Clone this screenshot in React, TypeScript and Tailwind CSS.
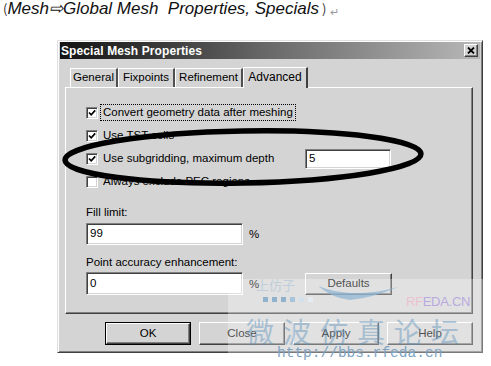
import React from 'react'

const UI = "font-['Liberation_Sans',Arial,sans-serif]"

const RAISED =
  'border border-t-white border-l-white border-r-[#404040] border-b-[#404040] shadow-[inset_-1px_-1px_0_#808080]'
const SUNKEN =
  'border border-t-[#808080] border-l-[#808080] border-r-white border-b-white shadow-[inset_1px_1px_0_#404040,inset_-1px_-1px_0_#d4d4d4] bg-white'

function Check({ checked }: { checked: boolean }) {
  return (
    <span className={`w-[12px] h-[12px] shrink-0 flex items-center justify-center ${SUNKEN}`}>
      {checked && (
        <svg width="8" height="8" viewBox="0 0 8 8">
          <path d="M1 3.5 L3.2 5.8 L7.2 1.4" stroke="#000" strokeWidth="1.7" fill="none" />
        </svg>
      )}
    </span>
  )
}

function Tab({ label, w, active }: { label: string; w: string; active?: boolean }) {
  if (active) {
    return (
      <div className={`${w} h-[21px] -mb-[1px] z-10 bg-[#d4d4d4] border-t border-l border-t-white border-l-white border-r-2 border-r-[#404040] flex items-center justify-center pb-[2px] text-[12px]`}>
        {label}
      </div>
    )
  }
  return (
    <div className={`${w} h-[19px] bg-[#d4d4d4] border-t border-l border-t-white border-l-white border-r-2 border-r-[#505050] flex items-center justify-center text-[11.5px]`}>
      {label}
    </div>
  )
}

function Btn({ label, def }: { label: string; def?: boolean }) {
  const inner = (
    <div className={`w-full h-full flex items-center justify-center text-[11.5px] bg-[#d4d4d4] ${RAISED}`}>{label}</div>
  )
  if (def) return <div className="w-[86px] h-[23px] border border-black">{inner}</div>
  return <div className="w-[86px] h-[23px]">{inner}</div>
}

export default function App() {
  return (
    <div className={`relative w-[491px] h-[366px] overflow-hidden bg-white text-black ${UI}`}>
      {/* caption above the dialog */}
      <div className="h-[40px] pl-[3px] flex items-start whitespace-pre leading-[18px]">
        <span className="text-[13px] font-['Noto_Sans_CJK_KR',sans-serif] text-[#333]">(</span>
        <span className="italic text-[17px] text-[#111]">{'Mesh⇨Global Mesh  Properties, Specials'}</span>
        <span className="text-[13px] font-['Noto_Sans_CJK_KR',sans-serif] text-[#333] ml-[3px]">)</span>
        <span className="text-[11px] text-[#999] ml-[4px] mt-[3px]">↵</span>
      </div>

      {/* dialog */}
      <div className="ml-[57px] w-[426px] bg-[#d4d4d4] border border-t-[#e0e0e0] border-l-[#e0e0e0] border-r-[#404040] border-b-[#404040] shadow-[inset_1px_1px_0_#ffffff,inset_-1px_-1px_0_#808080] px-[2px] pt-[1px] pb-[7px]">
        <div className="h-[17px] bg-gradient-to-r from-[#141414] via-[#6a6a6a] to-[#b8b8b8] flex items-center pl-[1px] pr-[2px]">
          <span className="text-white font-bold text-[12px] tracking-[0.1px]">Special Mesh Properties</span>
          <div className={`ml-auto w-[14px] h-[13px] bg-[#d4d4d4] flex items-center justify-center ${RAISED}`}>
            <svg width="8" height="7" viewBox="0 0 8 7">
              <path d="M1 0.5 L7 6.5 M7 0.5 L1 6.5" stroke="#000" strokeWidth="1.8" />
            </svg>
          </div>
        </div>

        {/* tabs */}
        <div className="mt-[7px] h-[21px] flex items-end pl-[10px]">
          <Tab label="General" w="w-[48px]" />
          <Tab label="Fixpoints" w="w-[57px]" />
          <Tab label="Refinement" w="w-[68px]" />
          <Tab label="Advanced" w="w-[65px]" active />
        </div>

        {/* panel */}
        <div className="ml-[5px] w-[408px] h-[227px] border border-t-white border-l-white border-r-[#404040] border-b-[#404040] shadow-[inset_-1px_-1px_0_#808080] pt-[13px] pl-[20px] text-[11.5px]">
          <div className="h-[23px] flex items-center">
            <Check checked />
            <span className="ml-[2px] px-[2px] leading-[15px] border border-dotted border-black">Convert geometry data after meshing</span>
          </div>
          <div className="h-[23px] flex items-center gap-[5px]">
            <Check checked />
            <span>Use TST cells</span>
          </div>
          <div className="h-[23px] flex items-center">
            <div className="w-[219px] flex items-center gap-[5px]">
              <Check checked />
              <span>Use subgridding, maximum depth</span>
            </div>
            <div className={`w-[86px] h-[20px] flex items-center pl-[3px] ${SUNKEN}`}>5</div>
          </div>
          <div className="h-[23px] flex items-center gap-[5px]">
            <Check checked={false} />
            <span>Always exclude PEC regions</span>
          </div>

          <div className="mt-[12px] h-[14px] leading-[14px]">Fill limit:</div>
          <div className="mt-[4px] flex items-center">
            <div className={`w-[157px] h-[22px] flex items-center pl-[3px] ${SUNKEN}`}>99</div>
            <span className="ml-[6px] mt-[2px]">%</span>
          </div>

          <div className="mt-[10px] h-[14px] leading-[14px]">Point accuracy enhancement:</div>
          <div className="mt-[3px] flex items-center">
            <div className="w-[219px] flex items-center">
              <div className={`w-[157px] h-[23px] flex items-center pl-[3px] ${SUNKEN}`}>0</div>
              <span className="ml-[6px] mt-[2px]">%</span>
            </div>
            <div className="w-[87px] h-[22px]">
              <div className={`w-full h-full flex items-center justify-center bg-[#d4d4d4] ${RAISED}`}>Defaults</div>
            </div>
          </div>
        </div>

        {/* buttons */}
        <div className="mt-[8px] flex justify-end gap-[8px] pr-[7px]">
          <Btn label="OK" def />
          <Btn label="Close" />
          <Btn label="Apply" />
          <Btn label="Help" />
        </div>
      </div>

      {/* forum watermark */}
      <div className="absolute left-[228px] top-[279px] right-0 bottom-0 bg-white/30 pointer-events-none" />
      <div className="absolute left-[256px] top-[275px] text-[13px] text-[#a9c3d6] font-['Noto_Sans_CJK_SC',sans-serif] opacity-60 pointer-events-none">
        上仿子
      </div>
      <div className="absolute left-[263px] top-[297px] flex gap-[4px] pointer-events-none">
        <span className="w-[5px] h-[5px] bg-[#8fb3cf]" />
        <span className="w-[5px] h-[5px] bg-[#8fb3cf]" />
        <span className="w-[5px] h-[5px] bg-[#8fb3cf]" />
        <span className="w-[5px] h-[5px] bg-[#a8c4da]" />
        <span className="w-[5px] h-[5px] bg-[#d4e0ea]" />
        <span className="w-[5px] h-[5px] bg-[#e4ecf2]" />
      </div>
      <svg className="absolute left-0 top-0 pointer-events-none" width="491" height="366">
        <path d="M318 286 Q352 300 398 287 Q372 298 350 300 Q332 298 318 286 Z" fill="#8fb6d4" opacity="0.75" />
      </svg>
      <div className="absolute left-[406px] top-[292px] text-[13px] tracking-[-0.3px] pointer-events-none">
        <span className="text-[#ecc2d2]">RF</span>
        <span className="text-[#b9a9e0]">EDA.CN</span>
      </div>
      <div className="absolute left-[246px] top-[314px] text-[28px] leading-[34px] tracking-[9px] text-[#5f93bd] opacity-45 font-['Noto_Sans_CJK_SC',sans-serif] pointer-events-none">
        微波仿真论坛
      </div>
      <div className="absolute left-[277px] top-[344px] text-[14.5px] leading-[18px] text-[#7ea3c2] font-['Liberation_Mono',monospace] pointer-events-none">
        http://bbs.rfeda.cn
      </div>

      {/* hand drawn ellipse highlight */}
      <svg className="absolute left-0 top-0 pointer-events-none" width="491" height="366">
        <ellipse cx="243" cy="157" rx="178" ry="26" transform="rotate(-1 243 157)" stroke="#000" strokeWidth="5.5" fill="none" />
      </svg>
    </div>
  )
}
